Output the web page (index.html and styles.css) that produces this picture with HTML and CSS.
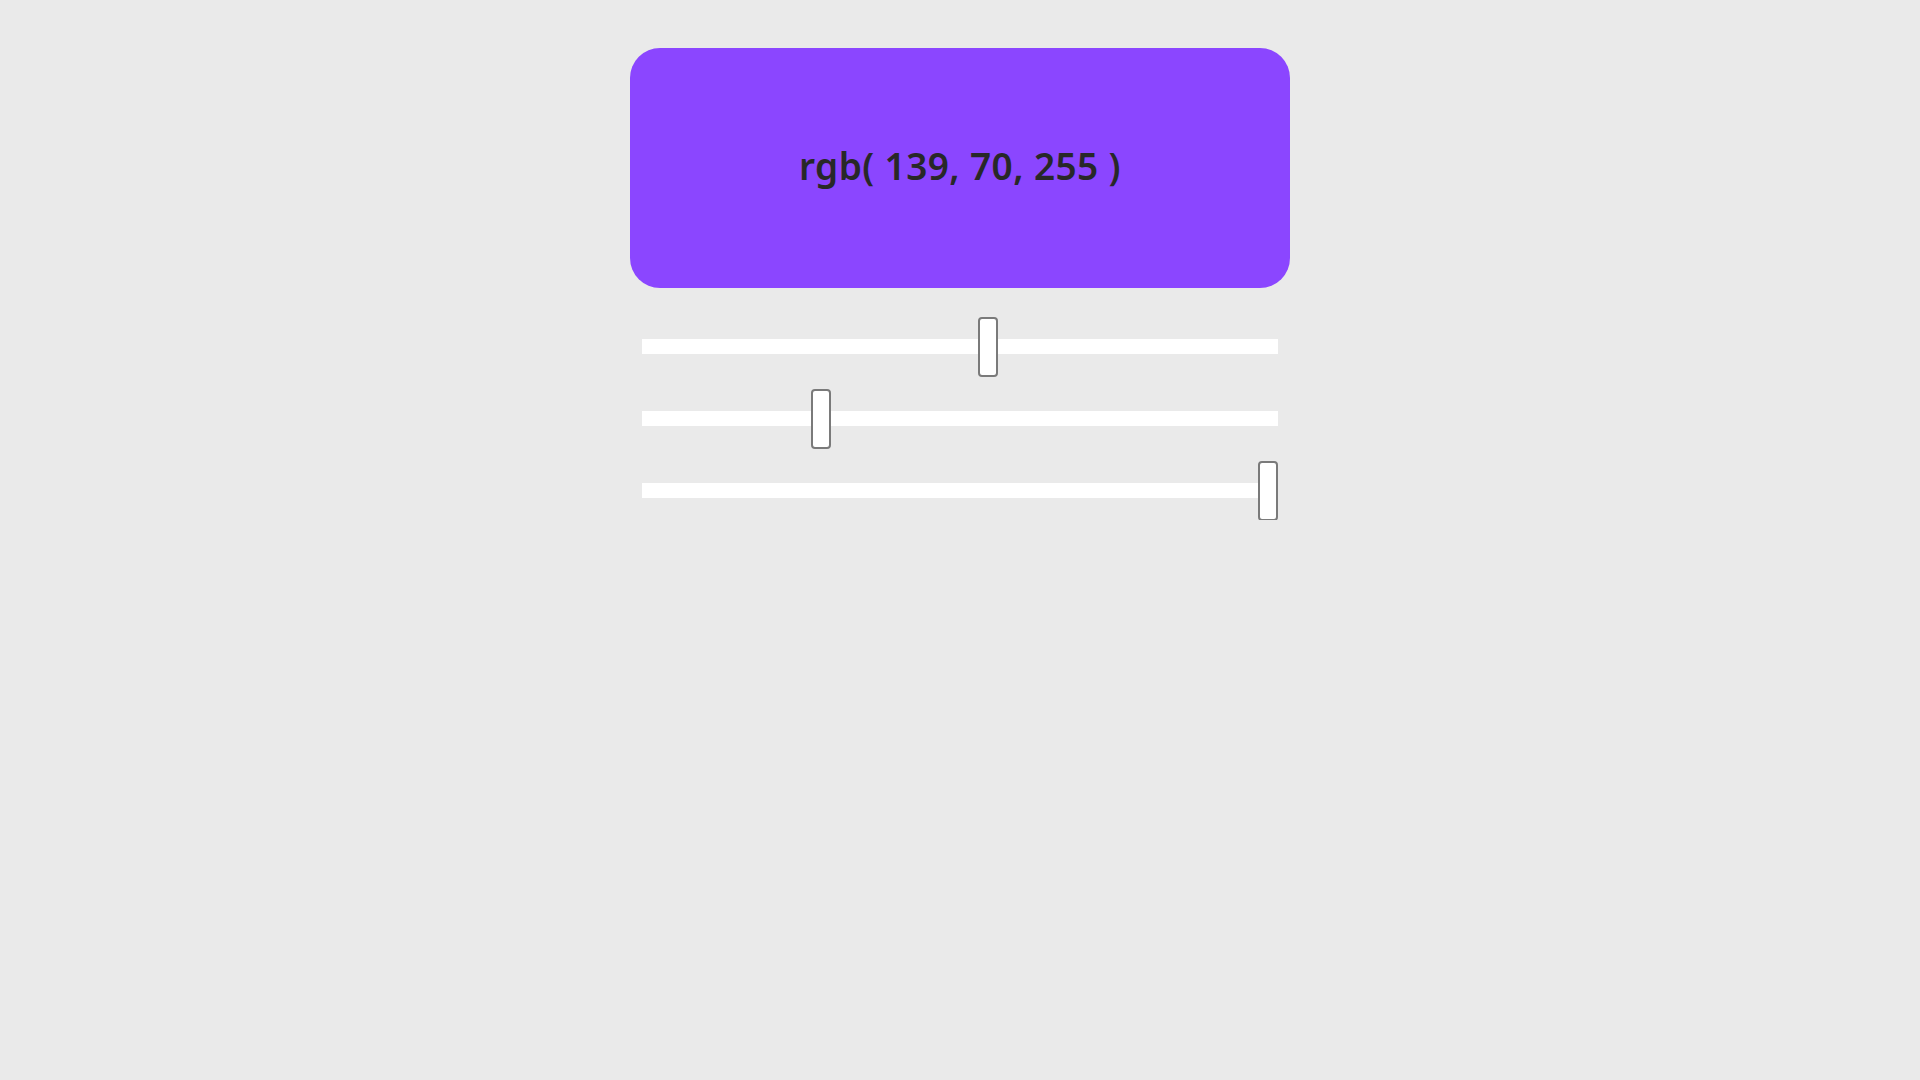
FILE: index.html
```html
<!DOCTYPE html>
<html lang="en">
<head>
<meta charset="utf-8">
<title>RGB Color Picker</title>
<link rel="stylesheet" href="styles.css">
</head>
<body>
<main class="app">
  <div class="preview"><span class="preview-label">rgb( 139, 70, 255 )</span></div>
  <div class="sliders">
    <input class="slider" type="range" min="0" max="255" value="139" aria-label="Red">
    <input class="slider" type="range" min="0" max="255" value="70" aria-label="Green">
    <input class="slider" type="range" min="0" max="255" value="255" aria-label="Blue">
  </div>
</main>
</body>
</html>
```
FILE: styles.css
```css
html, body {
  margin: 0;
  padding: 0;
}
body {
  background: #eaeaea;
  font-family: "Noto Sans", "Open Sans", sans-serif;
}
.app {
  width: 660px;
  margin: 48px auto 0;
}
.preview {
  height: 240px;
  border-radius: 30px;
  background: rgb(139, 70, 255);
  display: flex;
  align-items: center;
  justify-content: center;
}
.preview-label {
  font-size: 37px;
  font-weight: 600;
  color: #282828;
  letter-spacing: 0.4px;
  margin-top: -6px;
}
.sliders {
  display: flex;
  flex-direction: column;
  gap: 12px;
  padding: 0 12px;
  margin-top: 28px;
}
.slider {
  -webkit-appearance: none;
  appearance: none;
  display: block;
  width: 636px;
  height: 60px;
  margin: 0;
  padding: 0;
  background: transparent;
  outline: none;
}
.slider::-webkit-slider-runnable-track {
  height: 15px;
  background: #ffffff;
  border: none;
}
.slider::-webkit-slider-thumb {
  -webkit-appearance: none;
  appearance: none;
  width: 20px;
  height: 60px;
  background: #ffffff;
  border: 2px solid #7a7a7a;
  border-radius: 4px;
  margin-top: -22px;
}
.slider::-moz-range-track {
  height: 15px;
  background: #ffffff;
  border: none;
}
.slider::-moz-range-thumb {
  width: 16px;
  height: 56px;
  background: #ffffff;
  border: 2px solid #7a7a7a;
  border-radius: 4px;
}
```
